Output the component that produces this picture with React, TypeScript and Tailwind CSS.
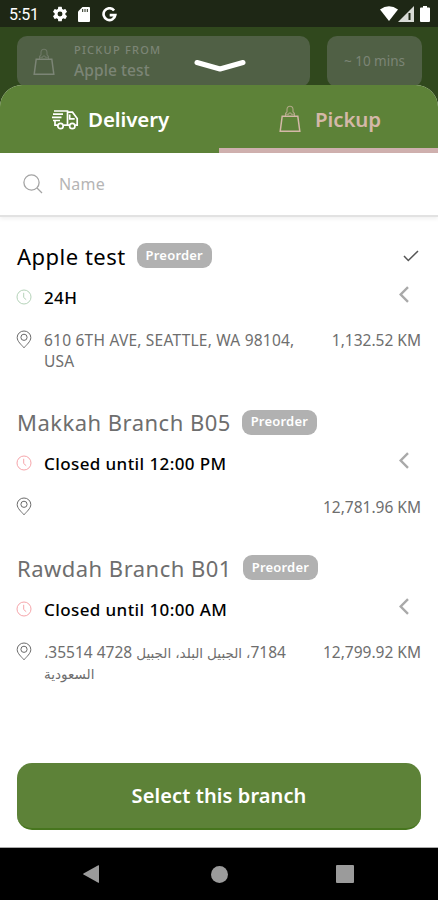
import React from "react";

const branches = [
  {
    name: "Apple test",
    hours: "24H",
    open: true,
    selected: true,
    address: ["610 6TH AVE, SEATTLE, WA 98104,", "USA"],
    distance: "1,132.52 KM",
  },
  {
    name: "Makkah Branch B05",
    hours: "Closed until 12:00 PM",
    open: false,
    selected: false,
    address: [],
    distance: "12,781.96 KM",
  },
  {
    name: "Rawdah Branch B01",
    hours: "Closed until 10:00 AM",
    open: false,
    selected: false,
    rtl: true,
    address: ["7184، الجبيل البلد، الجبيل 4728 35514،", "السعودية"],
    distance: "12,799.92 KM",
  },
];

function BagIcon({ className }: { className?: string }) {
  return (
    <svg viewBox="0 0 22 28" fill="none" stroke="currentColor" className={className}>
      <path d="M3.200 11.200h15.600l2 15H1.200z" strokeWidth="1.500" />
      <path
        d="M6.500 11V8.500L8 6.800V4.600C8 2.600 9.200 1.300 11 1.300s3 1.300 3 3.300v2.200l1.500 1.700V11M7 9.300h2.500l.8-1.300h1.400l.8 1.300H15"
        strokeWidth="1.100"
        opacity="0.700"
      />
    </svg>
  );
}

function TruckIcon() {
  return (
    <svg viewBox="0 0 28 22" fill="none" stroke="currentColor" strokeWidth="1.700" className="w-7 h-[22px]">
      <path d="M3 2h13.500v14.200h-4M2 5.200h10M1 8.400h9.500M2 11.500h7M4 11.500v4.700h2.500" />
      <path d="M16.500 3.200h5l4.700 6.300v6.700h-2M18.500 16.200h-2" />
      <path d="M18.700 5.500v4.300h5" />
      <circle cx="9.500" cy="17" r="2.700" />
      <circle cx="21.300" cy="17" r="2.700" />
    </svg>
  );
}

function ClockIcon({ className }: { className?: string }) {
  return (
    <svg viewBox="0 0 16 16" fill="none" stroke="currentColor" className={className}>
      <circle cx="8" cy="8" r="7" />
      <path d="M7.700 3.800v4.700l2.500 2.200" />
    </svg>
  );
}

function PinIcon() {
  return (
    <svg viewBox="0 0 16 19" fill="none" stroke="currentColor" className="-ml-px mr-px w-4 h-[19px] text-[#6b6b6b]">
      <path d="M8 17.800C5.500 14.800 1.200 11.500 1.200 7.500a6.800 6.500 0 0 1 13.600 0c0 4-4.300 7.300-6.800 10.300z" />
      <circle cx="8" cy="7.300" r="3.100" />
    </svg>
  );
}

function StatusBar() {
  return (
    <div className="flex h-[27px] shrink-0 items-center bg-[#1e2715] pl-[9px] pr-[8px] text-white">
      <span className="w-[43px] font-[Roboto] text-[16px] leading-5 mt-[2px] tracking-[-0.300px]">5:51</span>
      <svg viewBox="0 0 24 24" fill="currentColor" className="mt-[1px] -ml-px h-[18px] w-[18px]">
        <path d="M19.140 12.940c.040-.300.060-.610.060-.940s-.020-.640-.070-.940l2.030-1.580a.49.49 0 0 0 .12-.61l-1.920-3.320a.49.49 0 0 0-.59-.22l-2.390.96a7 7 0 0 0-1.620-.94l-.36-2.540A.48.48 0 0 0 13.920 2.400h-3.840a.47.47 0 0 0-.47.41l-.36 2.540c-.59.24-1.130.57-1.620.94l-2.390-.96a.48.48 0 0 0-.59.22L2.740 8.870a.47.47 0 0 0 .12.61l2.030 1.580a6 6 0 0 0 0 1.880l-2.030 1.580a.49.49 0 0 0-.12.61l1.920 3.320c.12.22.37.29.59.22l2.390-.96c.5.38 1.030.7 1.620.94l.36 2.540c.05.24.24.41.48.41h3.840c.24 0 .44-.17.47-.41l.36-2.540a7 7 0 0 0 1.620-.94l2.390.96c.22.08.47 0 .59-.22l1.920-3.320a.47.47 0 0 0-.12-.61zM12 15.300a3.300 3.300 0 1 1 0-6.600 3.300 3.300 0 0 1 0 6.600z" />
      </svg>
      <svg viewBox="0 0 12 15" className="ml-[9px] mt-[2px] h-[15px] w-3">
        <path d="M4.500 0H11q1 0 1 1v13q0 1-1 1H1q-1 0-1-1V4.500z" fill="currentColor" />
        <path d="M4.700 2v3M7 2v3M9.300 2v3" stroke="#1e2715" />
      </svg>
      <svg viewBox="0 0 16 16" fill="none" stroke="currentColor" strokeWidth="2.800" className="ml-[12px] mt-[2px] h-[15px] w-[15px]">
        <path d="M12.900 3.700A6.300 6.300 0 1 0 14.200 8.600H8.200" />
      </svg>
      <div className="ml-auto flex items-center">
        <svg viewBox="0 0 18 15" fill="currentColor" className="h-[15px] w-[18px]">
          <path d="M0 3.500Q9-3 18 3.500L9 15z" />
        </svg>
        <svg viewBox="0 0 16 16" className="h-4 w-4">
          <path d="M0 16L16 0v16z" fill="#d8dad6" />
          <path d="M11.500 7v7" stroke="#1e2715" strokeWidth="2" />
        </svg>
        <svg viewBox="0 0 10 16" fill="currentColor" className="ml-[6px] h-4 w-[10px]">
          <path d="M3 0h4v1.500h2q1 0 1 1V15q0 1-1 1H1q-1 0-1-1V2.500q0-1 1-1h2z" />
        </svg>
      </div>
    </div>
  );
}

// Arabic glyphs run wider than the Latin digits, so they are set a little smaller
function AddressLine({ text, rtl }: { text: string; rtl?: boolean }) {
  if (!rtl) return <div>{text}</div>;
  return (
    <div className="h-[21px]">
      {text.split(/([\u0600-\u06ff]+)/).map((part, i) =>
        /[\u0600-\u06ff]/.test(part) ? (
          <span key={i} className="text-[13.500px] leading-4">
            {part}
          </span>
        ) : (
          part
        )
      )}
    </div>
  );
}

function BranchCard({ branch }: { branch: (typeof branches)[number] }) {
  return (
    <div>
      <div className="flex h-7 items-center">
        <h2
          className={`whitespace-nowrap text-[22px] leading-7 -mt-px ${
            branch.selected ? "text-black tracking-[0.500px]" : "text-[#6e6e6e] tracking-[0.480px]"
          }`}
        >
          {branch.name}
        </h2>
        <span className="ml-[11px] -mt-px flex h-[25px] w-[75px] items-center justify-center rounded-[9px] bg-[#b1b1b1] text-[13px] font-semibold tracking-[0.200px] text-white">
          Preorder
        </span>
        {branch.selected && (
          <svg viewBox="0 0 16 12" fill="none" stroke="#555" strokeWidth="1.500" className="ml-auto mr-[2px] h-3 w-4">
            <path d="M1 6l4.300 4.500L15 1" />
          </svg>
        )}
      </div>
      <div className="mt-4 flex h-6 items-center">
        <ClockIcon
          className={`-ml-px mr-px h-4 w-4 -mt-[3px] ${branch.open ? "text-[#b5d3b9]" : "text-[#f6a5aa]"}`}
        />
        <span className="ml-[11px] -mt-px text-[17px] font-medium tracking-[0.400px] text-black">{branch.hours}</span>
        <svg viewBox="0 0 10 17" fill="none" stroke="#a9a9a9" strokeWidth="2.400" className="ml-auto mr-[12px] -mt-2 h-[17px] w-[10px]">
          <path d="M9 1.200L1.700 8.500L9 15.800" />
        </svg>
      </div>
      <div className="mt-5 flex items-start">
        <PinIcon />
        <div
          dir={branch.rtl ? "rtl" : "ltr"}
          className={`ml-[11px] min-h-[21px] text-left text-[15.500px] leading-[21px] whitespace-nowrap text-[#6e6e6e] ${
            branch.rtl ? "" : "tracking-[0.220px]"
          }`}
        >
          {branch.address.map((line) => (
            <AddressLine key={line} text={line} rtl={branch.rtl} />
          ))}
        </div>
        <span className="ml-auto whitespace-nowrap text-[15.500px] leading-[21px] text-[#6e6e6e]">
          {branch.distance}
        </span>
      </div>
    </div>
  );
}

export default function App() {
  return (
    <div className="flex h-[900px] w-[438px] flex-col overflow-hidden bg-white font-['Noto_Sans','DejaVu_Sans',sans-serif]">
      <StatusBar />

      {/* Dimmed page behind the sheet */}
      <div className="relative flex h-[82px] shrink-0 items-start gap-[17px] bg-[#30481d] pl-[17px] pt-[9px] text-[#7c8576]">
        <div className="flex h-[51px] w-[293px] rounded-[10px] bg-[#506045]">
          <BagIcon className="ml-[16px] mt-[12px] h-7 w-[22px]" />
          <div className="ml-[19px]">
            <p className="mt-[7px] text-[11px] leading-[14px] font-medium tracking-[1.250px]">PICKUP FROM</p>
            <p className="mt-[3px] text-[15.500px] leading-[21px] font-medium tracking-[0.100px]">Apple test</p>
          </div>
        </div>
        <div className="flex h-[51px] w-[95px] items-center justify-center rounded-[10px] bg-[#506045] text-[13.500px]">
          ~ 10 mins
        </div>
        <svg viewBox="0 0 54 16" fill="none" className="absolute left-[193px] top-[31px] h-4 w-[54px]">
          <path d="M4 4.500L27 11L50 4.500" stroke="#fff" strokeWidth="5" strokeLinecap="round" strokeLinejoin="round" />
        </svg>
      </div>

      <div className="relative -mt-6 flex flex-1 flex-col overflow-hidden rounded-t-[22px] bg-white">
        {/* Tabs */}
        <div className="grid h-[68px] grid-cols-2 bg-[#5d8238] text-[20.500px] font-semibold">
          <button className="flex items-center pl-[51px] pt-[1px] text-white">
            <TruckIcon />
            <span className="ml-[9px] tracking-[-0.100px]">Delivery</span>
          </button>
          <button className="flex items-center border-b-[5px] border-[#cfb0ae] pl-[60px] pt-[6px] text-[#d4b8a8]">
            <BagIcon className="mb-[1px] h-7 w-[22px]" />
            <span className="ml-[14px] tracking-[-0.100px]">Pickup</span>
          </button>
        </div>

        {/* Search */}
        <div className="flex h-[64px] items-center border-b-2 border-[#e2e2e2] pl-[23px] shadow-[0_2px_4px_rgba(0,0,0,0.060)]">
          <svg viewBox="0 0 20 20" fill="none" stroke="#a4a4a4" strokeWidth="1.300" className="h-5 w-5">
            <circle cx="8.500" cy="8.500" r="7.600" />
            <path d="M14 14l5 5" />
          </svg>
          <span className="ml-4 text-[16px] tracking-[0.200px] text-[#b5b5b5]">Name</span>
        </div>

        <div className="flex flex-1 flex-col gap-[36.500px] px-[17px] pt-[25px]">
          {branches.map((branch) => (
            <BranchCard key={branch.name} branch={branch} />
          ))}
        </div>

        <div className="px-[17px] pb-[17px]">
          <button className="h-[67px] w-full rounded-[15px] border-b-2 border-[#47761e] bg-[#5d8238] text-[20px] font-semibold tracking-[0.100px] text-white">
            Select this branch
          </button>
        </div>
      </div>

      {/* Navigation bar */}
      <div className="flex h-[53px] shrink-0 items-center border-t border-[#aaa] bg-black pl-[83px] text-[#9b9b9b]">
        <svg viewBox="0 0 17 18" fill="currentColor" className="h-[18px] w-[17px]">
          <path d="M16 .500v17q0 .500-.700.200L.500 9.500q-.700-.500 0-1L15.300.200Q16 0 16 .500z" />
        </svg>
        <div className="ml-[111px] h-[17px] w-[17px] rounded-full bg-[#9b9b9b]" />
        <div className="ml-[108px] h-[18px] w-[18px] rounded-[1px] bg-[#9b9b9b]" />
      </div>
    </div>
  );
}
